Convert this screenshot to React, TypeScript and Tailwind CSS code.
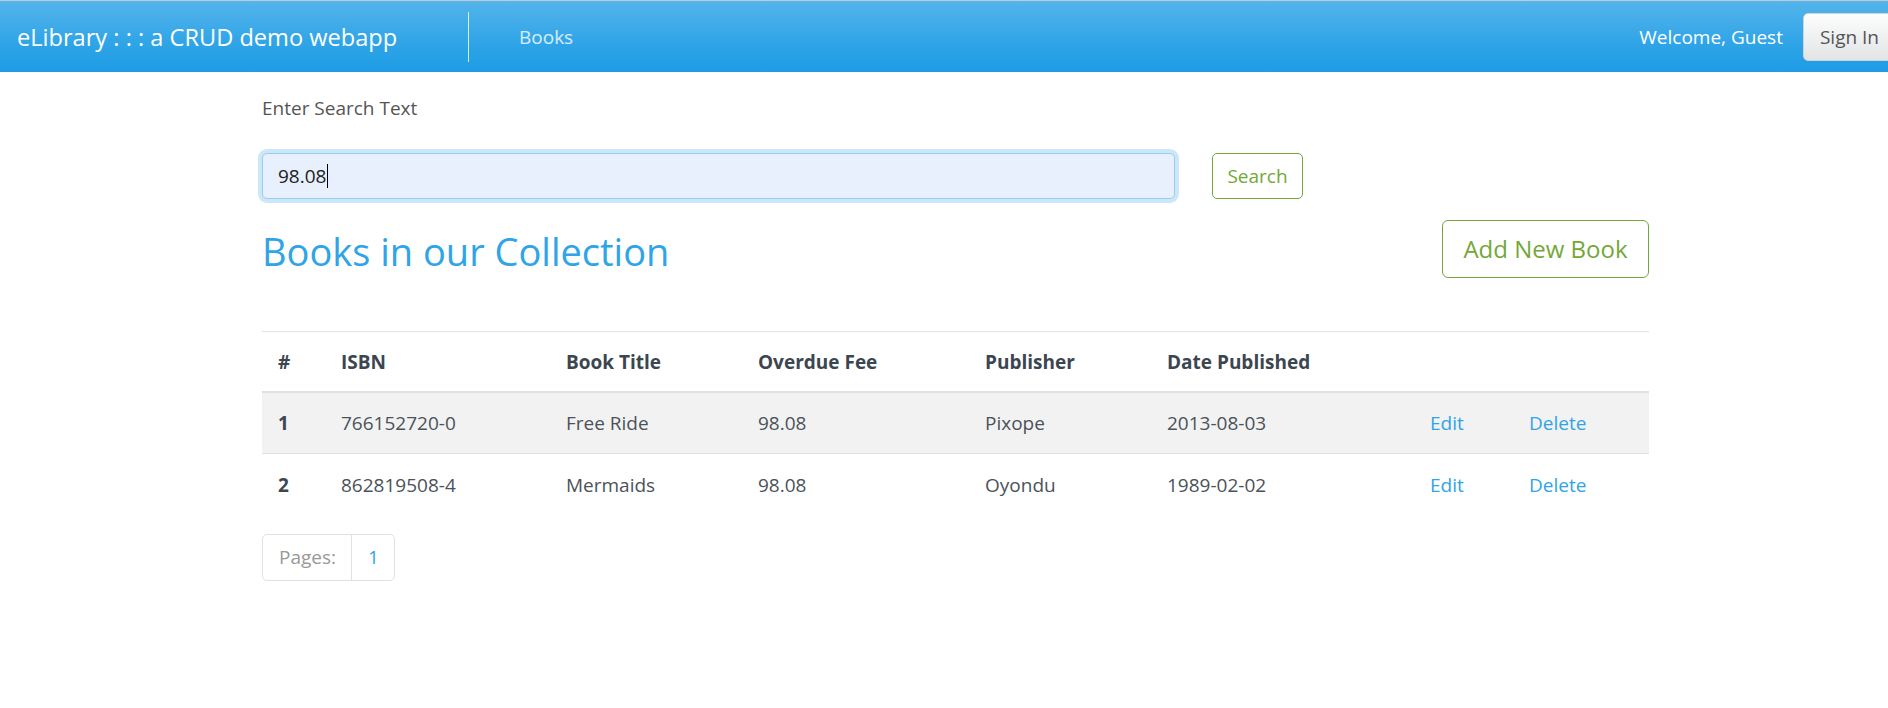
import React from 'react';

interface Book {
  id: number;
  isbn: string;
  title: string;
  fee: string;
  publisher: string;
  date: string;
}

const books: Book[] = [
  { id: 1, isbn: '766152720-0', title: 'Free Ride', fee: '98.08', publisher: 'Pixope', date: '2013-08-03' },
  { id: 2, isbn: '862819508-4', title: 'Mermaids', fee: '98.08', publisher: 'Oyondu', date: '1989-02-02' },
];

const Navbar: React.FC = () => (
  <nav className="h-[72px] border-t border-[#c2cad0] bg-[linear-gradient(#54b4eb,#2fa4e7_60%,#1d9ce5)] flex items-center overflow-hidden">
    <a className="pl-[17px] w-[468px] text-[23.6px] leading-[30px] text-white">eLibrary : : : a CRUD demo webapp</a>
    <div className="w-px h-[50px] bg-white/80" />
    <a className="ml-[50px] text-[19px] leading-[28px] text-white/80">Books</a>
    <div className="ml-auto flex items-center gap-[20px] mr-[-8px]">
      <span className="text-[19px] leading-[28px] text-white">Welcome, Guest</span>
      <button className="h-[48px] px-[16px] rounded-[5px] border border-[#cfd3d6] bg-[linear-gradient(#fdfdfd,#e2e4e6)] text-[19px] text-[#555]">
        Sign In
      </button>
    </div>
  </nav>
);

const BooksTable: React.FC = () => (
  <table className="w-full table-fixed border-collapse border-t border-[#e1e4e7] mt-[53px]">
    <colgroup>
      <col className="w-[63px]" />
      <col className="w-[225px]" />
      <col className="w-[192px]" />
      <col className="w-[227px]" />
      <col className="w-[182px]" />
      <col className="w-[263px]" />
      <col className="w-[99px]" />
      <col className="w-[136px]" />
    </colgroup>
    <thead>
      <tr className="h-[60px] border-b-2 border-[#dee2e6] text-left text-[#3c4651]">
        <th className="pl-[16px] pt-px font-bold">#</th>
        <th className="pl-[16px] pt-px font-bold">ISBN</th>
        <th className="pl-[16px] pt-px font-bold">Book Title</th>
        <th className="pl-[16px] pt-px font-bold">Overdue Fee</th>
        <th className="pl-[16px] pt-px font-bold">Publisher</th>
        <th className="pl-[16px] pt-px font-bold">Date Published</th>
        <th />
        <th />
      </tr>
    </thead>
    <tbody>
      {books.map((book, i) => (
        <tr
          key={book.id}
          className={`h-[62px] text-[#4b5259] ${i === 0 ? 'bg-[#f2f2f2] border-b border-[#dee2e6]' : ''}`}
        >
          <td className="pl-[16px] font-bold text-[#3c4651]">{book.id}</td>
          <td className="pl-[16px]">{book.isbn}</td>
          <td className="pl-[16px]">{book.title}</td>
          <td className="pl-[16px]">{book.fee}</td>
          <td className="pl-[16px]">{book.publisher}</td>
          <td className="pl-[16px]">{book.date}</td>
          <td className="pl-[16px]">
            <a className="text-[#2fa4e7]">Edit</a>
          </td>
          <td className="pl-[16px]">
            <a className="text-[#2fa4e7]">Delete</a>
          </td>
        </tr>
      ))}
    </tbody>
  </table>
);

export default function App() {
  return (
    <div className="min-h-[708px] bg-white font-['Open_Sans','Noto_Sans',sans-serif] text-[19px] leading-[28px] text-[#555]">
      <Navbar />
      <main className="ml-[262px] w-[1387px]">
        <div className="pt-[22px]">Enter Search Text</div>

        <div className="flex items-center mt-[31px]">
          <div className="w-[913px] h-[46px] rounded-[5px] border border-[#98cdf0] bg-[#e8f0fe] shadow-[0_0_0_4px_#cce7f8] px-[15px] flex items-center text-[#222]">
            98.08
            <span className="inline-block w-px h-[24px] bg-black ml-px" />
          </div>
          <button className="ml-[37px] w-[91px] h-[46px] rounded-[5px] border border-[#73a839] text-[#73a839]">
            Search
          </button>
        </div>

        <div className="flex items-start justify-between mt-[21px]">
          <h2 className="mt-[9px] text-[38px] leading-[44px] text-[#2fa4e7]">Books in our Collection</h2>
          <button className="w-[207px] h-[58px] rounded-[6px] border border-[#73a839] text-[24px] text-[#73a839]">
            Add New Book
          </button>
        </div>

        <BooksTable />

        <div className="inline-flex h-[47px] mt-[18px] border border-[#dee2e6] rounded-[5px] items-stretch">
          <span className="flex items-center pl-[16px] pr-[15px] text-[#999]">Pages:</span>
          <span className="flex items-center pl-[16px] pr-[15px] border-l border-[#dee2e6] text-[#2fa4e7]">1</span>
        </div>
      </main>
    </div>
  );
}
